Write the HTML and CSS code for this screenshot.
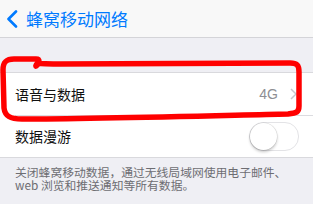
FILE: index.html
```html
<!DOCTYPE html>
<html>
<head>
  <meta charset="UTF-8">
  <title>蜂窝移动网络</title>
  <link rel="stylesheet" href="styles.css">
</head>
<body>
  <div class="nav">
    <svg class="back" width="12" height="18" viewBox="0 0 12 18"><path d="M10 1.5 L2.5 9 L10 16.5" fill="none" stroke="#007aff" stroke-width="2.6" stroke-linecap="round" stroke-linejoin="round"/></svg>
    <span class="nav-title">蜂窝移动网络</span>
  </div>
  <div class="spacer"></div>
  <div class="group">
    <div class="cell">
      <span class="label">语音与数据</span>
      <span class="detail">4G</span>
      <svg class="chev" width="7" height="12" viewBox="0 0 7 12"><path d="M1 1 L6 6 L1 11" fill="none" stroke="#c7c7cc" stroke-width="1.5"/></svg>
    </div>
    <div class="cell">
      <span class="label">数据漫游</span>
      <span class="toggle"><span class="knob"></span></span>
    </div>
  </div>
  <p class="footer">关闭蜂窝移动数据，通过无线局域网使用电子邮件、<br>web 浏览和推送通知等所有数据。</p>

  <svg class="marker" width="313" height="204" viewBox="0 0 313 204">
    <path d="M36 66 C36 62 40 64 60 64 L290 63 C297 63 299 65 299 72 L299 106 C299 112 297 113 288 114 C200 116 90 119 22 119 C10 119 5 116 4 108 L3 70 C3 62 6 59 14 59 L36 59 C40 59 40 63 36 66"
      fill="none" stroke="#f00" stroke-width="5.5" stroke-linecap="round" stroke-linejoin="round"/>
  </svg>
</body>
</html>
```

FILE: styles.css
```css
body { margin: 0; width: 313px; height: 204px; overflow: hidden; background: #efeff4; font-family: "Noto Sans CJK SC", "Noto Sans", sans-serif; position: relative; }
.nav { height: 37px; background: #f8f8f8; border-bottom: 1px solid #d4d4d8; display: flex; align-items: center; }
.back { margin-left: 6px; margin-right: 8px; }
.nav-title { color: #007aff; font-size: 17px; line-height: 20px; }
.spacer { height: 34px; }
.group { background: #fff; border-top: 1px solid #d9d9dd; border-bottom: 1px solid #d9d9dd; }
.cell { height: 41px; display: flex; align-items: center; padding: 0 14px 0 15px; position: relative; }
.cell + .cell { height: 42px; }
.cell + .cell::before { content: ""; position: absolute; left: 15px; right: 0; top: 0; border-top: 1px solid #dcdce0; }
.cell:first-child { border-bottom: 1px solid transparent; }
.label { flex: 1; font-size: 14px; color: #111; }
.detail { font-family: "Liberation Sans", Arial, sans-serif; font-size: 14px; color: #8e8e93; margin-right: 12px; }
.chev { margin-right: 2px; flex: none; }
.toggle { flex: none; width: 48px; height: 27px; border-radius: 14px; border: 1px solid #e3e3e6; background: #fff; position: relative; }
.knob { position: absolute; left: 0; top: 0; width: 27px; height: 27px; border-radius: 50%; background: #fff; box-shadow: 0 2px 3px rgba(0,0,0,0.22), 0 0 0 0.5px rgba(0,0,0,0.12); }
.footer { margin: 7px 15px 0; font-size: 11.8px; line-height: 13px; color: #6d6d72; }
.marker { position: absolute; left: 0; top: 0; pointer-events: none; }
```
